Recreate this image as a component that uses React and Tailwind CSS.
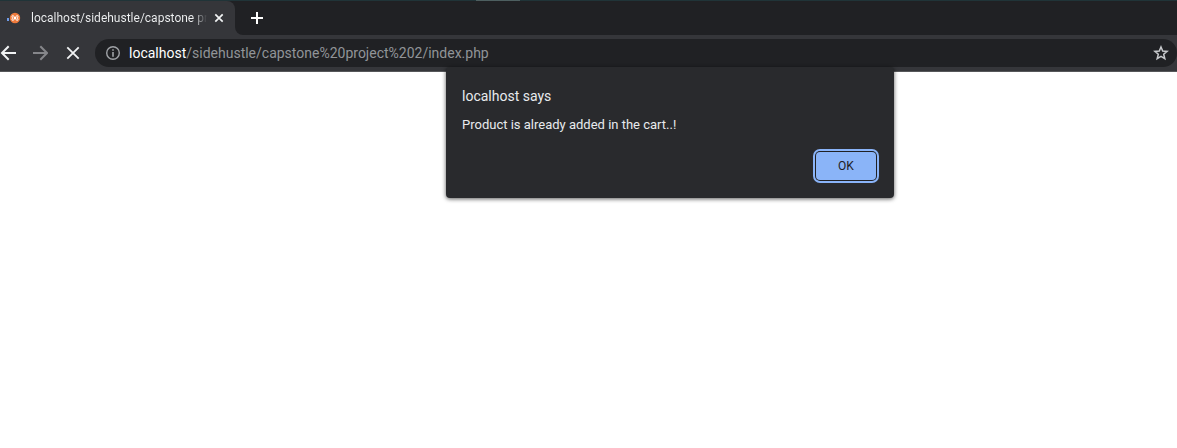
import React from "react";

function Xampp() {
  return (
    <svg className="h-4 w-4 shrink-0" viewBox="0 0 16 16" aria-hidden="true">
      <rect x="1" y="8" width="2" height="3" fill="#6f9be8" />
      <circle cx="9" cy="8" r="5.2" fill="#ee7a3c" />
      <path
        d="M8 7.5V6.6C8 5.4 6 5.3 6 6.3C6 7 6.5 7.4 6.5 8C6.5 8.6 6 9 6 9.7C6 10.7 8 10.6 8 9.4V8.5H10V9.4C10 10.6 12 10.7 12 9.7C12 9 11.5 8.6 11.5 8C11.5 7.4 12 7 12 6.3C12 5.3 10 5.4 10 6.6V7.5Z"
        fill="none"
        stroke="#fff"
        strokeWidth="1"
      />
    </svg>
  );
}

function Stroke({ d, className, width = 2, box = 16 }) {
  return (
    <svg className={className} viewBox={`0 0 ${box} ${box}`} fill="none" stroke="currentColor" strokeWidth={width} aria-hidden="true">
      <path d={d} />
    </svg>
  );
}

function WindowEdge() {
  return (
    <div className="flex h-px bg-[#203438]">
      <div className="ml-[476px] w-11 bg-[#4d5f60]" />
    </div>
  );
}

function TabStrip() {
  return (
    <div className="flex h-[34px] items-stretch bg-[#202124]">
      <div className="flex w-[235px] items-center rounded-tr-lg bg-[#35363a] pl-1.5">
        <Xampp />
        <span className="ml-[9px] w-[176px] shrink-0 whitespace-nowrap bg-linear-to-r from-[#f1f3f4] from-92% to-transparent bg-clip-text text-xs text-transparent">
          localhost/sidehustle/capstone pro
        </span>
        <button type="button" aria-label="Close tab" className="ml-1 text-[#f1f3f4]">
          <Stroke className="h-4 w-4" d="M4.3 4.3L11.7 11.7M11.7 4.3L4.3 11.7" width={1.7} />
        </button>
      </div>
      <div className="w-2 bg-[#35363a]">
        <div className="h-full rounded-bl-lg bg-[#202124]" />
      </div>
      <button type="button" aria-label="New tab" className="ml-1.5 text-white">
        <Stroke className="h-4 w-4" d="M8 2V14M2 8H14" />
      </button>
    </div>
  );
}

function Toolbar() {
  return (
    <div className="flex h-[37px] items-center border-b border-[#56575a] bg-[#35363a]">
      <button type="button" aria-label="Back" className="text-[#f1f3f4]">
        <Stroke className="h-4 w-4" d="M8.7 1.3L2 8L8.7 14.7M2 8H16" />
      </button>
      <button type="button" aria-label="Forward" className="ml-4 text-[#85868a]">
        <Stroke className="h-4 w-4" d="M8.3 1.3L15 8L8.3 14.7M15 8H1" />
      </button>
      <button type="button" aria-label="Stop loading" className="ml-[17px] text-[#f1f3f4]">
        <Stroke className="h-4 w-4" d="M2.3 2.3L13.7 13.7M13.7 2.3L2.3 13.7" width={1.8} />
      </button>
      <div className="ml-3.5 flex h-7 grow items-center rounded-full bg-[#202124] pl-2.5 pr-2">
        <button type="button" aria-label="Site information" className="text-[#a0a3a7]">
          <svg className="h-4 w-4" viewBox="0 0 16 16" aria-hidden="true">
            <circle cx="8" cy="8" r="6.3" fill="none" stroke="currentColor" strokeWidth="1.4" />
            <path d="M7.2 4.2H8.8V5.8H7.2ZM7.2 7H8.8V11.8H7.2Z" fill="currentColor" />
          </svg>
        </button>
        <div className="ml-2 grow whitespace-nowrap text-sm text-[#919498]">
          <span className="text-white">localhost</span>/sidehustle/capstone%20project%202/index.php
        </div>
        <button type="button" aria-label="Bookmark this page" className="text-[#c7c9cc]">
          <Stroke className="h-4 w-4" d="M8 2L9.7 6.1L14.1 6.4L10.7 9.3L11.8 13.7L8 11.3L4.2 13.7L5.3 9.3L1.9 6.4L6.3 6.1Z" width={1.5} />
        </button>
      </div>
    </div>
  );
}

function AlertDialog() {
  return (
    <div
      role="alertdialog"
      aria-labelledby="alert-title"
      aria-describedby="alert-message"
      className="absolute left-[446px] top-[67px] flex w-[448px] flex-col rounded bg-[#292a2d] px-4 pb-[18px] pt-[17px] shadow-[0_1px_4px_rgba(0,0,0,0.65)]"
    >
      <h1 id="alert-title" className="text-sm leading-6 text-[#e8eaed]">localhost says</h1>
      <p id="alert-message" className="mt-[7px] text-[13px] leading-5 text-[#e8eaed]">Product is already added in the cart..!</p>
      <button
        type="button"
        className="mr-0.5 mt-[17px] h-7 w-[60px] self-end rounded-sm bg-[#8ab4f8] text-xs text-[#202124] shadow-[0_0_0_1px_#202124,0_0_0_3px_#8ab4f8]"
      >
        OK
      </button>
    </div>
  );
}

export default function App() {
  return (
    <div className="relative min-h-screen bg-white font-['Roboto',sans-serif]">
      <WindowEdge />
      <TabStrip />
      <Toolbar />
      <AlertDialog />
    </div>
  );
}
